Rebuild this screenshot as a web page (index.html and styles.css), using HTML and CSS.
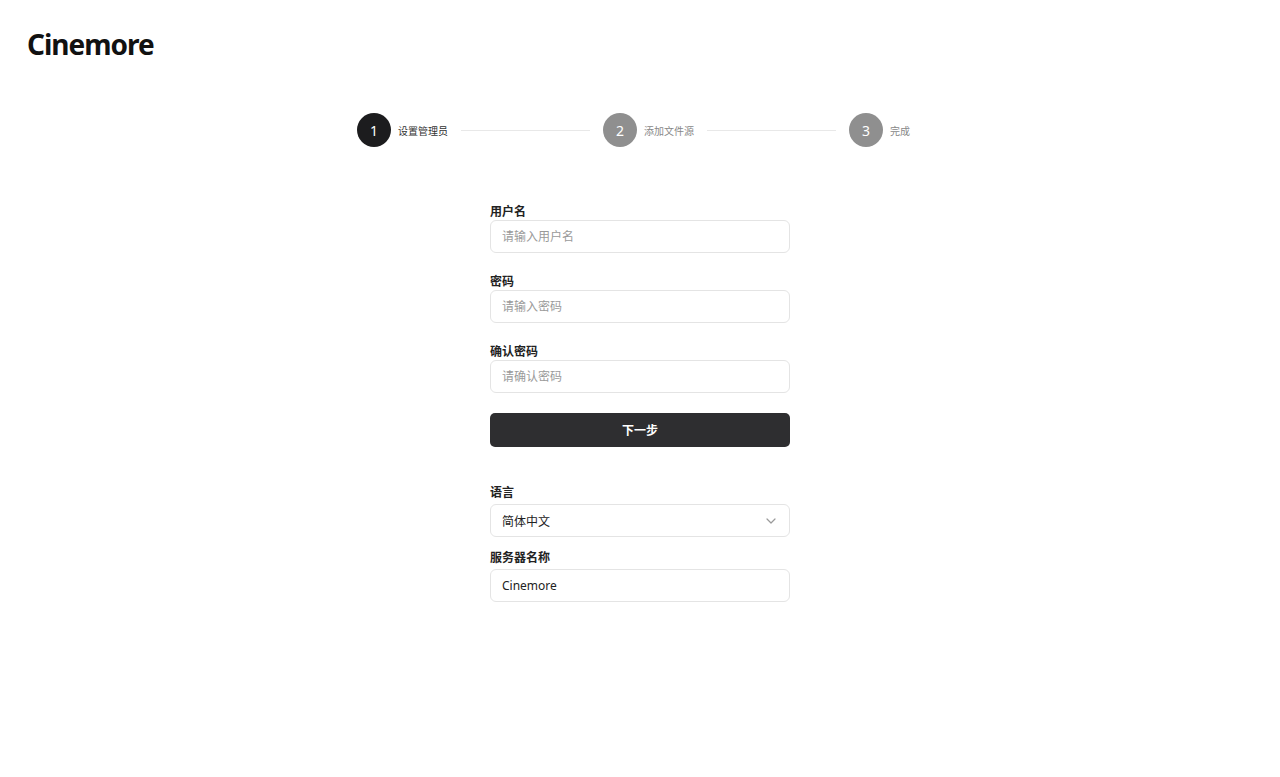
FILE: index.html
```html
<!DOCTYPE html>
<html lang="zh-CN">

<head>
    <meta charset="UTF-8">
    <meta name="viewport" content="width=device-width, initial-scale=1.0">
    <title>Cinemore</title>
    <link rel="stylesheet" href="styles.css">
</head>

<body>
    <div class="page">
        <div class="logo">Cinemore</div>

        <div class="stepper">
            <div class="step active">
                <div class="circle">1</div>
                <span class="step-label">设置管理员</span>
            </div>
            <div class="separator"></div>
            <div class="step">
                <div class="circle">2</div>
                <span class="step-label">添加文件源</span>
            </div>
            <div class="separator"></div>
            <div class="step">
                <div class="circle">3</div>
                <span class="step-label">完成</span>
            </div>
        </div>

        <form class="form" onsubmit="return false">
            <div class="field">
                <label for="username">用户名</label>
                <input class="input" type="text" id="username" placeholder="请输入用户名">
            </div>
            <div class="field">
                <label for="password">密码</label>
                <input class="input" type="password" id="password" placeholder="请输入密码">
            </div>
            <div class="field">
                <label for="confirm">确认密码</label>
                <input class="input" type="password" id="confirm" placeholder="请确认密码">
            </div>
            <button type="submit" class="btn">下一步</button>

            <div class="settings">
                <div class="field small">
                    <label for="lang">语言</label>
                    <div class="select">
                        <span>简体中文</span>
                        <svg width="10" height="6" viewBox="0 0 10 6" fill="none">
                            <path d="M1 1l4 4 4-4" stroke="#9a9a9a" stroke-width="1.2" stroke-linecap="round" stroke-linejoin="round" />
                        </svg>
                    </div>
                </div>
                <div class="field small">
                    <label for="server">服务器名称</label>
                    <input class="input value" type="text" id="server" value="Cinemore">
                </div>
            </div>
        </form>
    </div>
</body>

</html>
```

FILE: styles.css
```css
* {
    margin: 0;
    padding: 0;
    box-sizing: border-box;
}

body {
    font-family: "Noto Sans", "Noto Sans CJK SC", sans-serif;
    background: #fff;
    color: #1a1a1a;
}

.page {
    min-height: 100vh;
}

.logo {
    padding: 25px 0 0 27px;
    font-size: 28px;
    font-weight: 700;
    line-height: 38px;
    letter-spacing: -1px;
    color: #111;
}

.stepper {
    display: flex;
    align-items: center;
    width: 553px;
    margin: 50px 0 0 calc(50% - 283px);
}

.step {
    display: flex;
    align-items: center;
    gap: 7px;
}

.circle {
    width: 34px;
    height: 34px;
    border-radius: 50%;
    background: #8f8f8f;
    color: #fff;
    font-size: 14px;
    display: flex;
    align-items: center;
    justify-content: center;
}

.step-label {
    font-size: 10px;
    color: #888;
}

.step.active .circle {
    background: #1c1c1e;
}

.step.active .step-label {
    color: #333;
}

.separator {
    flex: 1;
    height: 1px;
    background: #e8e8e8;
    margin: 0 13px;
}

.form {
    width: 300px;
    margin: 56px auto 0;
}

.field {
    margin-bottom: 20px;
}

.field label {
    display: block;
    font-size: 12px;
    font-weight: 700;
    line-height: 17px;
    color: #222;
}

.input,
.select {
    display: block;
    width: 100%;
    height: 33px;
    padding: 0 11px;
    border: 1px solid #e4e4e4;
    border-radius: 6px;
    font-family: inherit;
    font-size: 12px;
    color: #222;
    outline: none;
    background: #fff;
}

.input::placeholder {
    color: #9a9a9a;
}

.btn {
    display: block;
    width: 100%;
    height: 34px;
    border: none;
    border-radius: 5px;
    background: #2e2e30;
    color: #fff;
    font-family: inherit;
    font-size: 12px;
    font-weight: 700;
    cursor: pointer;
}

.settings {
    margin-top: 37px;
}

.field.small {
    margin-bottom: 12px;
}

.field.small label {
    margin-bottom: 3px;
}

.select {
    display: flex;
    align-items: center;
    justify-content: space-between;
    padding-right: 13px;
}
```
